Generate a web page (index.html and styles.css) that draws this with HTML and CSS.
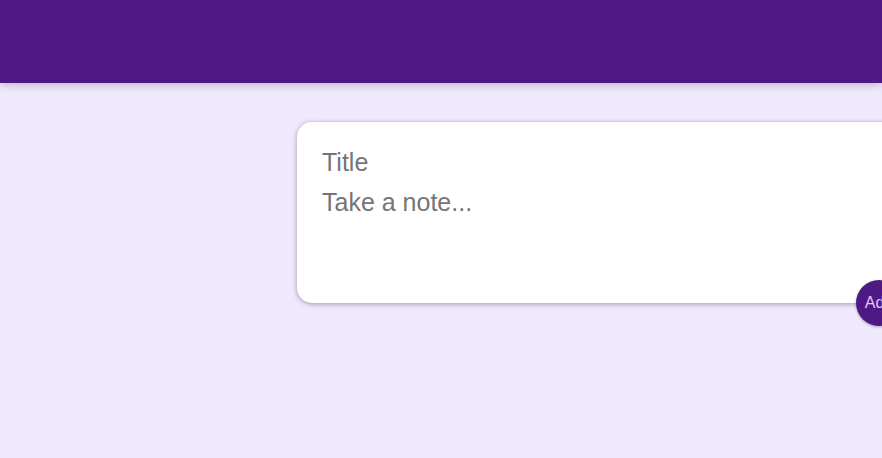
FILE: index.html
```html
<!DOCTYPE html>
<html>
<head>
<meta charset="utf-8">
<link rel="stylesheet" href="styles.css">
</head>
<body>
<header class="header"></header>
<main class="main">
  <form class="note-form">
    <input class="title-input" type="text" placeholder="Title">
    <textarea class="note-input" placeholder="Take a note..." rows="3"></textarea>
    <button class="add-btn" type="button">Add</button>
  </form>
</main>
</body>
</html>
```
FILE: styles.css
```css
html, body {
  margin: 0;
  padding: 0;
  width: 882px;
  height: 458px;
  overflow: hidden;
}
body {
  background: #f0e8fc;
  font-family: "Liberation Sans", Arial, sans-serif;
}
.header {
  height: 83px;
  background: #4e1985;
  box-shadow: 0 0 10px rgba(0,0,0,0.3);
  position: relative;
}
.main {
  padding: 39px 0 0 297px;
}
.note-form {
  position: relative;
  width: 620px;
  height: 181px;
  box-sizing: border-box;
  background: #fff;
  border-radius: 15px;
  box-shadow: 0 1px 5px rgba(0,0,0,0.35);
  padding: 26px 25px 0;
  display: flex;
  flex-direction: column;
  gap: 11px;
}
.title-input, .note-input {
  border: none;
  outline: none;
  padding: 0;
  margin: 0;
  font-family: "Liberation Sans", Arial, sans-serif;
  font-size: 25px;
  line-height: 29px;
  color: #444;
  background: transparent;
  resize: none;
}
.note-input {
  height: 87px;
}
.title-input::placeholder, .note-input::placeholder {
  color: #757575;
}
.add-btn {
  position: absolute;
  left: 559px;
  top: 158px;
  width: 46px;
  height: 46px;
  border-radius: 50%;
  border: none;
  background: #4e1985;
  color: #e6c6f2;
  font-family: "Liberation Sans", Arial, sans-serif;
  font-size: 16px;
  padding: 0;
  box-shadow: 0 1px 3px rgba(0,0,0,0.3);
}
```
